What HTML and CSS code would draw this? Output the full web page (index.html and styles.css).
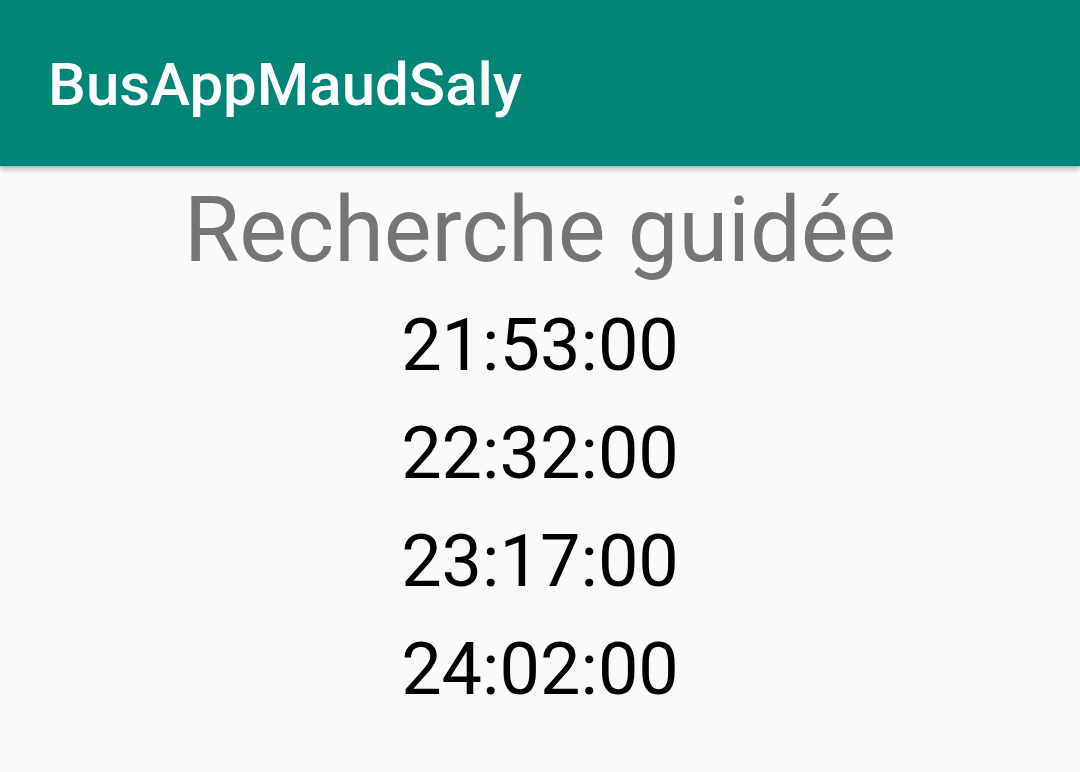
FILE: index.html
```html
<!DOCTYPE html>
<html lang="fr">
<head>
<meta charset="utf-8">
<title>BusAppMaudSaly</title>
<link rel="stylesheet" href="styles.css">
</head>
<body>
<header class="app-bar">
  <h1 class="app-title">BusAppMaudSaly</h1>
</header>
<main class="content">
  <h2 class="heading">Recherche guidée</h2>
  <ul class="times">
    <li class="time">21:53:00</li>
    <li class="time">22:32:00</li>
    <li class="time">23:17:00</li>
    <li class="time">24:02:00</li>
  </ul>
</main>
</body>
</html>
```
FILE: styles.css
```css
html, body {
  margin: 0;
  padding: 0;
}
body {
  background: #fafafa;
  font-family: Roboto, "Noto Sans", "Liberation Sans", sans-serif;
  width: 1080px;
  height: 772px;
  overflow: hidden;
}
.app-bar {
  position: relative;
  z-index: 1;
  height: 166px;
  background: #008577;
  display: flex;
  align-items: center;
  padding: 3px 0 0 48px;
  box-sizing: border-box;
  box-shadow: 0 4px 6px rgba(0, 0, 0, 0.22), 0 1px 2px rgba(0, 0, 0, 0.12);
}
.app-title {
  margin: 0;
  color: #ffffff;
  font-size: 60px;
  font-weight: 500;
  line-height: normal;
}
.content {
  display: flex;
  flex-direction: column;
  align-items: center;
  padding-top: 12px;
}
.heading {
  margin: 0;
  font-size: 90px;
  font-weight: 400;
  color: #757575;
  line-height: 106px;
}
.times {
  list-style: none;
  margin: 8px 0 0;
  padding: 0;
  display: flex;
  flex-direction: column;
  align-items: center;
}
.time {
  font-size: 72px;
  color: #000000;
  line-height: 108px;
}
```
